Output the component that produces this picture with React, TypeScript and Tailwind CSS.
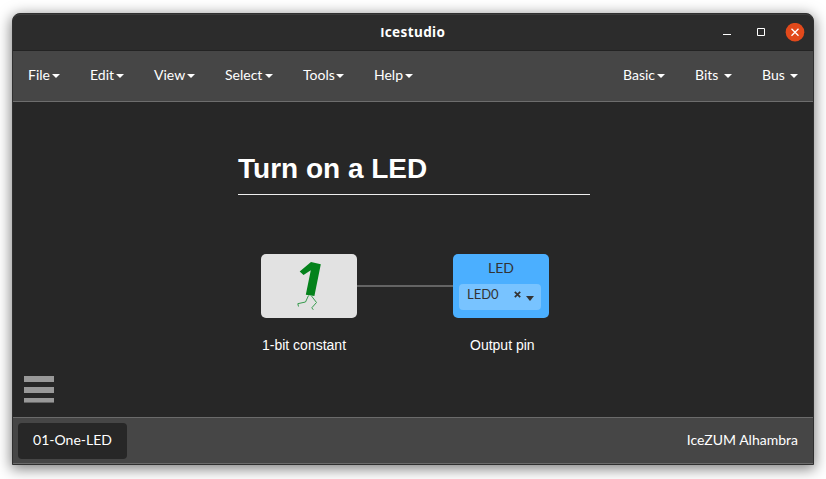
import React from "react";

function Caret() {
  return (
    <span className="mt-[2px] h-0 w-0 border-x-4 border-t-4 border-x-transparent border-t-white" />
  );
}

function MenuItem({ label, width, spaced = false }: { label: string; width: string; spaced?: boolean }) {
  return (
    <div className={`flex items-center justify-between whitespace-pre ${width}`}>
      <span>{label + (spaced ? " " : "")}</span>
      <Caret />
    </div>
  );
}

function TitleBar() {
  return (
    <header className="grid h-[37px] grid-cols-3 items-center rounded-t-[7px] border-t border-[#3d3d3d] border-b border-b-[#232323] bg-[#2c2c2c]">
      <span />
      <h1 className="text-center font-['Noto_Sans',sans-serif] text-[13.5px] leading-5 font-bold tracking-[0.4px]">
        <span className="font-['Liberation_Sans',Arial,sans-serif]">I</span>cestudio
      </h1>
      <div className="flex items-center justify-end pr-[8px]">
        <svg className="h-[19px] w-[82px]" viewBox="0 0 82 19" fill="none">
          <path d="M0 11.5h8" stroke="#fff" />
          <path d="M34.5 5.5h7v7h-7z" stroke="#fff" />
          <circle cx="72" cy="9.2" r="9.3" fill="#e2491b" />
          <path d="M68.5 5.7l7 7M75.5 5.7l-7 7" stroke="#fff" strokeWidth="1.3" />
        </svg>
      </div>
    </header>
  );
}

function MenuBar() {
  return (
    <nav className="flex h-[51px] justify-between border-b border-[#6d6d6d] bg-[#464646] px-[15px] pb-[2px] text-[14px] leading-5">
      <div className="flex gap-[30px]">
        <MenuItem label="File" width="w-8" />
        <MenuItem label="Edit" width="w-[34px]" />
        <MenuItem label="View" width="w-[41px]" />
        <MenuItem label="Select" width="w-[48px]" />
        <MenuItem label="Tools" width="w-[41px]" />
        <MenuItem label="Help" width="w-[39px]" />
      </div>
      <div className="flex gap-[30px]">
        <MenuItem label="Basic" width="w-[42px]" />
        <MenuItem label="Bits" width="w-[37px]" spaced />
        <MenuItem label="Bus" width="w-[36px]" spaced />
      </div>
    </nav>
  );
}

function Canvas() {
  return (
    <main className="relative h-[315px] bg-[#272727] font-['Liberation_Sans',Arial,sans-serif]">
      <h2 className="absolute top-[51px] left-[225px] h-[42px] w-[352px] border-b border-[#eee] text-[28px] leading-8 font-bold">
        Turn on a LED
      </h2>
      <div className="absolute top-[183px] left-[344px] h-[2px] w-[96px] bg-[#646464]" />

      <div className="absolute top-[152px] left-[248px] h-16 w-24 rounded-[5px] bg-[#e2e2e2]">
        <svg className="h-16 w-24" viewBox="0 0 96 64" fill="none">
          <path d="M38.7 17.5L50 8l9.8 2.2L53.4 42l-8.6-1.3 5-24.5-7.3 4.8z" fill="#04821b" />
          <path
            d="M47.5 41.5l-3 6.5-7.7 1.7.7 2.8M50.5 42l5 6.5-4.7 5.3 1.5 2"
            stroke="#369b4d"
            strokeWidth="1"
          />
        </svg>
      </div>
      <p className="absolute top-[233px] left-[249px] text-[14px] leading-5 whitespace-nowrap">1-bit constant</p>

      <div className="absolute top-[152px] left-[440px] h-16 w-24 rounded-[5px] bg-[#4bafff] px-[6px] pt-[4px] font-['Lato',sans-serif] text-[#333]">
        <div className="text-center text-[14px] leading-5">LED</div>
        <div className="mt-[6px] flex h-[26px] w-[82px] rounded-[4px] bg-[#78c3ff] pl-2 text-[13px] leading-[21px]">
          <span className="w-[47px]">LED0</span>
          <svg className="mt-[7px] h-[7px] w-[7px]" viewBox="0 0 7 7">
            <path d="M.8.8l5.4 5.4M6.2.8L.8 6.2" stroke="#333" strokeWidth="1.7" />
          </svg>
          <span className="mt-[12px] ml-[5px] h-0 w-0 border-x-4 border-t-[5px] border-x-transparent border-t-[#333]" />
        </div>
      </div>
      <p className="absolute top-[233px] left-[457px] text-[14px] leading-5 whitespace-nowrap">Output pin</p>

      <div className="absolute top-[274px] left-[11px] flex w-[30px] flex-col gap-[5px]">
        <span className="h-[6px] bg-[#999]" />
        <span className="h-[6px] bg-[#999]" />
        <span className="h-[5px] border-b border-[#666] bg-[#999]" />
      </div>
    </main>
  );
}

function Footer() {
  return (
    <footer className="flex h-[47px] items-start justify-between border-y border-[#6b6b6b] bg-[#464646] pt-[5px] pr-[15px] pl-[5px] text-[14px] leading-[34px]">
      <div className="h-9 w-[109px] rounded-[4px] bg-[#272727] text-center">01-One-LED</div>
      <span>IceZUM Alhambra</span>
    </footer>
  );
}

export default function App() {
  return (
    <div className="h-[479px] w-[826px] overflow-hidden bg-white pt-[13px] pl-[12px] font-['Lato',sans-serif] text-white">
      <div className="h-[452px] w-[802px] rounded-t-[8px] border border-[#303030] bg-[#272727] shadow-[0_3px_14px_1px_rgba(0,0,0,0.5)]">
        <TitleBar />
        <MenuBar />
        <Canvas />
        <Footer />
      </div>
    </div>
  );
}
